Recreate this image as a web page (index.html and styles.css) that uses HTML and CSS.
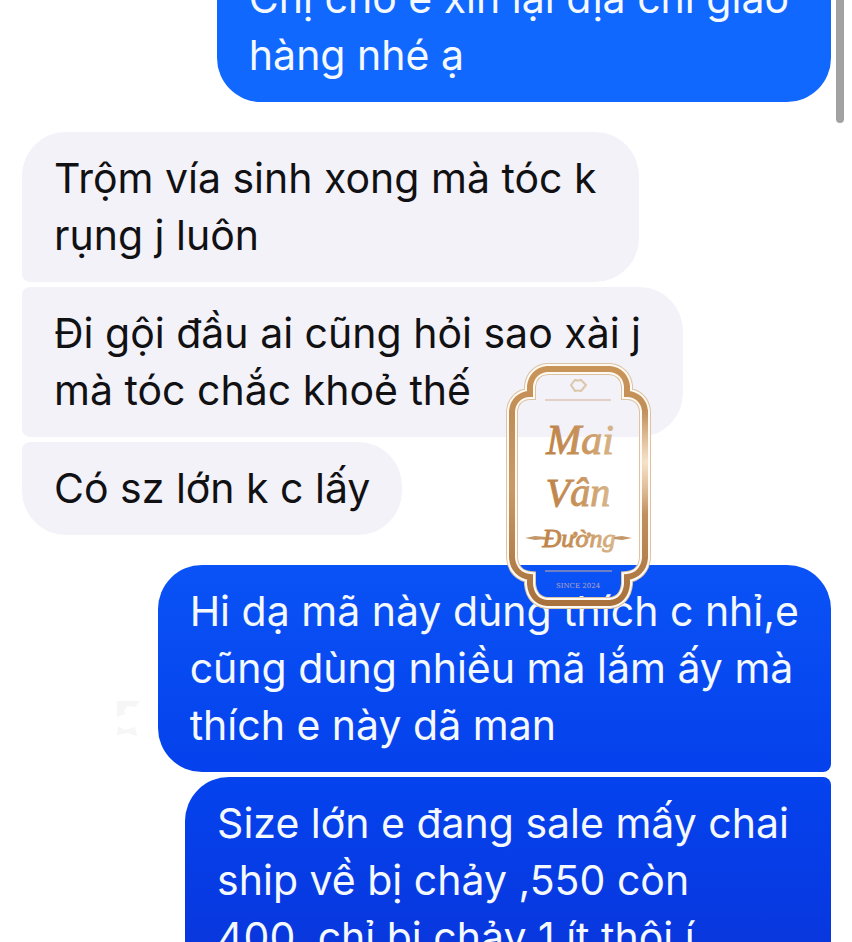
FILE: index.html
```html
<!DOCTYPE html>
<html lang="vi">
<head>
    <meta charset="UTF-8">
    <meta name="viewport" content="width=device-width, initial-scale=1">
    <title>Tin nhắn</title>
    <link rel="stylesheet" href="styles.css">
</head>
<body>
    <main class="chat">
        <div class="group sent">
            <p class="bubble">Chị cho e xin lại địa chỉ giao<br>hàng nhé ạ</p>
        </div>

        <div class="group received">
            <p class="bubble wide-end">Trộm vía sinh xong mà tóc k<br>rụng j luôn</p>
            <p class="bubble wide-end">Đi gội đầu ai cũng hỏi sao xài j<br>mà tóc chắc khoẻ thế</p>
            <p class="bubble">Có sz lớn k c lấy</p>
        </div>

        <div class="group sent">
            <p class="bubble blue-mid">Hi dạ mã này dùng thích c nhỉ,e<br>cũng dùng nhiều mã lắm ấy mà<br>thích e này dã man</p>
            <p class="bubble blue-deep">Size lớn e đang sale mấy chai<br>ship về bị chảy ,550 còn<br>400, chỉ bị chảy 1 ít thôi í</p>
        </div>
    </main>

    <div class="scrollbar"></div>

    <svg class="ghost" width="26" height="40" viewBox="0 0 26 40" aria-hidden="true">
        <path d="M1 2H24L19 8L12 7L8 11L9 15L1 18Z"/>
        <path d="M2 27L9 31L19 28L21 37L12 34L1 36Z"/>
    </svg>

    <svg class="badge" width="180" height="270" viewBox="0 0 180 270" role="img" aria-label="Mai Vân Đường">
        <defs>
            <linearGradient id="frameGold" x1="0" y1="0" x2="0" y2="1">
                <stop offset="0" stop-color="#c99458"/>
                <stop offset="0.2" stop-color="#c18e58"/>
                <stop offset="0.5" stop-color="#c99a68"/>
                <stop offset="1" stop-color="#a9713c"/>
            </linearGradient>
            <radialGradient id="frameShine" gradientUnits="userSpaceOnUse" cx="156" cy="112" r="52">
                <stop offset="0" stop-color="#f6e3ca"/>
                <stop offset="1" stop-color="#f6e3ca" stop-opacity="0"/>
            </radialGradient>
            <linearGradient id="textGold" x1="0" y1="0" x2="1" y2="0">
                <stop offset="0" stop-color="#bd8248"/>
                <stop offset="0.5" stop-color="#c7925b"/>
                <stop offset="1" stop-color="#d8b68a"/>
            </linearGradient>
            <path id="frame" d="M57 19H120C130 20 136 27 137 36V44C147 44 154 51 155 61V208C154 219 147 226 137 227V234C136 245 130 252 120 253H57C47 252 41 245 40 234V227C30 226 23 219 22 208V61C23 51 30 44 40 44V36C41 27 47 20 57 19Z"/>
        </defs>
        <use href="#frame" class="frame-edge"/>
        <use href="#frame" class="frame-white"/>
        <use href="#frame" class="frame-band"/>
        <use href="#frame" class="frame-shine"/>
        <path class="ornament" d="M81 35L85 30Q88 31 91 30L96 35L91 41Q88 40 85 41Z"/>
        <path class="rule" d="M55 50H121M55 221H122"/>
        <text class="script" x="90" y="104" font-size="42">Mai</text>
        <text class="script" x="88" y="156" font-size="40">Vân</text>
        <text class="script" x="89" y="197" font-size="26">Đường</text>
        <path class="stroke-end" d="M35 188L45 186L56 187V189L45 190ZM124 187L132 186L142 188L132 190L124 189Z"/>
        <text class="since" x="88" y="238" font-size="7">SINCE 2024</text>
    </svg>
</body>
</html>
```
FILE: styles.css
```css
* {
    box-sizing: border-box;
}

body {
    position: relative;
    margin: 0;
    height: 100vh;
    overflow: hidden;
    background-color: #fff;
    font-family: Inter, "Noto Sans", sans-serif;
}

/* thread is scrolled, the first bubble is cut by the top edge */
.chat {
    display: flex;
    flex-direction: column;
    gap: 30px;
    margin-top: -48px;
    padding: 0 21px 0 22px;
}

.group {
    display: flex;
    flex-direction: column;
    gap: 5px;
}

.received {
    align-items: flex-start;
}

.sent {
    align-items: flex-end;
}

.bubble {
    margin: 0;
    padding: 18px 32px;
    border-radius: 44px;
    font-size: 41px;
    line-height: 57px;
}

.received .bubble {
    background-color: #f3f2f9;
    color: #111114;
}

.sent .bubble {
    padding-right: 42px;
    background-color: #1068ff;
    color: #f4f8ff;
}

.received .wide-end {
    padding-right: 42px;
}

.received .bubble:not(:last-child) {
    border-bottom-left-radius: 8px;
}

.received .bubble:not(:first-child) {
    border-top-left-radius: 8px;
}

.sent .bubble:not(:last-child) {
    border-bottom-right-radius: 8px;
}

.sent .bubble:not(:first-child) {
    border-top-right-radius: 8px;
}

.sent .blue-mid {
    padding-right: 32px;
    background: linear-gradient(#0a53f6, #0541ec);
}

.sent .blue-deep {
    background: linear-gradient(#0443ee, #0a34da);
}

.scrollbar {
    position: absolute;
    top: 0;
    right: 8px;
    width: 8px;
    height: 123px;
    border-radius: 0 0 4px 4px;
    background-color: #a2a2a2;
}

.ghost {
    position: absolute;
    top: 699px;
    left: 116px;
    fill: #f6f6f6;
}

.badge {
    position: absolute;
    top: 350px;
    left: 490px;
}

.badge use {
    fill: none;
}

.frame-edge {
    stroke: #dcc3a2;
    stroke-width: 12;
}

.frame-white {
    stroke: #fffaf3;
    stroke-width: 10;
}

.frame-band {
    stroke: url(#frameGold);
    stroke-width: 6;
}

.frame-shine {
    stroke: url(#frameShine);
    stroke-width: 6;
}

.ornament {
    fill: none;
    stroke: #dcc7ab;
    stroke-width: 2;
}

.rule {
    stroke: #d0ae92;
    stroke-width: 1;
}

.script {
    fill: url(#textGold);
    stroke: url(#textGold);
    stroke-width: 1;
    font-family: "Liberation Serif", serif;
    font-style: italic;
    text-anchor: middle;
}

.stroke-end {
    fill: #c39769;
}

.since {
    fill: #b9a3c0;
    font-family: "DejaVu Serif", serif;
    text-anchor: middle;
}
```
